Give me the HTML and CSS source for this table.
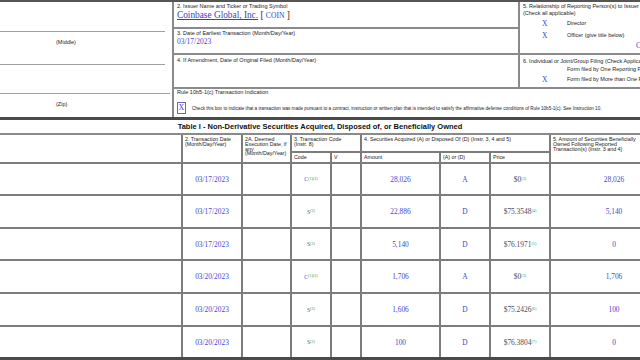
FILE: index.html
```html
<!DOCTYPE html>
<html lang="en">

<head>
  <meta charset="UTF-8">
  <meta name="viewport" content="width=device-width, initial-scale=1.0">
  <title>SEC Form 4 - Coinbase Global, Inc.</title>
  <link rel="stylesheet" href="styles.css">
</head>

<body>

  <div class="form">
    <div class="top">
      <div class="name-col">
        <div class="name-row first"></div>
        <div class="name-row middle"><span class="hint">(Middle)</span></div>
        <div class="name-row third"></div>
        <div class="name-row last"><span class="hint">(Zip)</span></div>
      </div>

      <div class="box issuer">
        <div class="lbl">2. Issuer Name and Ticker or Trading Symbol</div>
        <div class="issuer-name"><a href="#">Coinbase Global, Inc.</a> [ <span class="ticker">COIN</span> ]</div>
      </div>

      <div class="box relation">
        <div class="lbl">5. Relationship of Reporting Person(s) to Issuer</div>
        <div class="lbl">(Check all applicable)</div>
        <div class="check-row">
          <span class="mark">X</span>
          <span class="lbl">Director</span>
        </div>
        <div class="check-row">
          <span class="mark">X</span>
          <span class="lbl">Officer (give title below)</span>
        </div>
        <div class="officer-title">Chairman and CEO</div>
      </div>

      <div class="box date">
        <div class="lbl">3. Date of Earliest Transaction (Month/Day/Year)</div>
        <div class="value">03/17/2023</div>
      </div>

      <div class="box amend">
        <div class="lbl">4. If Amendment, Date of Original Filed (Month/Day/Year)</div>
      </div>

      <div class="box filing">
        <div class="lbl">6. Individual or Joint/Group Filing (Check Applicable Line)</div>
        <div class="check-row">
          <span class="mark"></span>
          <span class="lbl">Form filed by One Reporting Person</span>
        </div>
        <div class="check-row">
          <span class="mark">X</span>
          <span class="lbl">Form filed by More than One Reporting Person</span>
        </div>
      </div>

      <div class="box rule">
        <div class="lbl">Rule 10b5-1(c) Transaction Indication</div>
        <div class="rule-check">
          <span class="checkbox">X</span>
          <span class="tiny">Check this box to indicate that a transaction was made pursuant to a contract, instruction or written plan that is intended to satisfy the affirmative defense conditions of Rule 10b5-1(c). See Instruction 10.</span>
        </div>
      </div>
    </div>

    <div class="table-title">Table I - Non-Derivative Securities Acquired, Disposed of, or Beneficially Owned</div>

    <div class="t1">
      <div class="th span-rows"></div>
      <div class="th span-rows">2. Transaction Date<br>(Month/Day/Year)</div>
      <div class="th span-rows">2A. Deemed<br>Execution Date, if<br>any<br>(Month/Day/Year)</div>
      <div class="th span-2">3. Transaction Code<br>(Instr. 8)</div>
      <div class="th span-3">4. Securities Acquired (A) or Disposed Of (D) (Instr. 3, 4 and 5)</div>
      <div class="th span-rows">5. Amount of Securities Beneficially<br>Owned Following Reported<br>Transaction(s) (Instr. 3 and 4)</div>
      <div class="th span-rows">6. Ownership Form: Direct (D) or Indirect (I) (Instr. 4)</div>
      <div class="th sub">Code</div>
      <div class="th sub">V</div>
      <div class="th sub">Amount</div>
      <div class="th sub">(A) or (D)</div>
      <div class="th sub">Price</div>
    </div>
  </div>

  <script src="app.js"></script>
</body>

</html>
```

FILE: app.js
```js
// filas de la tabla I
var filas = [
  ["03/17/2023", "C", "(1)(2)", "28,026", "A", "$0", "(3)", "28,026"],
  ["03/17/2023", "S", "(2)", "22,886", "D", "$75.3548", "(4)", "5,140"],
  ["03/17/2023", "S", "(2)", "5,140", "D", "$76.1971", "(5)", "0"],
  ["03/20/2023", "C", "(1)(2)", "1,706", "A", "$0", "(3)", "1,706"],
  ["03/20/2023", "S", "(2)", "1,606", "D", "$75.2426", "(6)", "100"],
  ["03/20/2023", "S", "(2)", "100", "D", "$76.3804", "(7)", "0"]
];

var tabla = document.querySelector(".t1");

function celda(html, clase) {
  var div = document.createElement("div");
  div.className = "td " + (clase || "");
  div.innerHTML = html;
  tabla.appendChild(div);
}

for (const f of filas) {
  celda("");
  celda(f[0], "data");
  celda("");
  celda(f[1] + '<sup class="foot">' + f[2] + '</sup>', "data code");
  celda("");
  celda(f[3], "data");
  celda(f[4], "data");
  celda(f[5] + '<sup class="foot">' + f[6] + '</sup>', "data price");
  celda(f[7], "data");
  celda("D", "data");
}
```

FILE: styles.css
```css
body {
  margin: 0;
  overflow: hidden;
  background: #fff;
  font-family: "Liberation Sans", Arial, sans-serif;
  color: #222;
}

.form {
  width: 900px;
}

/* cabecera del formulario */

.top {
  display: grid;
  grid-template-columns: 172px 344px 380px;
  grid-template-rows: 25px 24px 32px 28px;
  gap: 2px;
  background: #8a8a8a;
  border-top: 2px solid #555;
  border-bottom: 3px solid #4a4a4a;
}

.box {
  background: #fff;
  padding: 1px 3px 0 3px;
}

.lbl {
  font-size: 5.5px;
  line-height: 7px;
}

.name-col {
  grid-row: 1 / 5;
  background: #fff;
  display: flex;
  flex-direction: column;
}

.name-row {
  border-bottom: 1px solid #a0a0a0;
  margin-right: 7px;
  padding: 7px 0 0 56px;
  font-size: 5.5px;
  line-height: 7px;
}

.name-row.first {
  height: 29px;
  padding: 0;
}

.name-row.middle {
  height: 25px;
}

.name-row.third {
  height: 28px;
  padding: 0;
  margin-right: 2px;
}

.name-row.last {
  border-bottom: none;
  flex: 1;
}

.issuer {
  grid-column: 2;
  grid-row: 1;
}

.issuer-name {
  font-family: "Liberation Serif", "Times New Roman", serif;
  font-size: 9.3px;
  line-height: 11px;
}

.issuer-name a {
  color: #3b3bcc;
}

.ticker {
  font-size: 7.6px;
  color: #3b3bcc;
}

.relation {
  grid-column: 3;
  grid-row: 1 / 3;
}

.date {
  grid-column: 2;
  grid-row: 2;
}

.value {
  font-family: "Liberation Serif", "Times New Roman", serif;
  font-size: 7.5px;
  line-height: 9px;
  color: #4646d4;
}

.amend {
  grid-column: 2;
  grid-row: 3;
  padding-top: 2px;
}

.filing {
  grid-column: 3;
  grid-row: 3;
  padding-top: 3px;
}

.rule {
  grid-column: 2 / 4;
  grid-row: 4;
  padding-top: 0;
}

.check-row {
  display: flex;
  align-items: center;
  height: 12px;
}

.filing .check-row {
  height: 8px;
}

.filing .check-row + .check-row {
  height: 12px;
}

.mark {
  width: 44px;
  padding-left: 19px;
  box-sizing: border-box;
  font-family: "Liberation Serif", "Times New Roman", serif;
  font-size: 7.5px;
  color: #3b3bcc;
}

.officer-title {
  padding-left: 113px;
  font-family: "Liberation Serif", "Times New Roman", serif;
  font-size: 7.5px;
  line-height: 9px;
  color: #4646d4;
  white-space: nowrap;
}

.rule-check {
  display: flex;
  align-items: center;
  gap: 6px;
  margin-top: 6px;
}

.checkbox {
  width: 7px;
  height: 10px;
  border: 1px solid #6a6ab4;
  font-family: "Liberation Serif", "Times New Roman", serif;
  font-size: 8px;
  line-height: 10px;
  text-align: center;
  color: #3b3bcc;
}

.tiny {
  font-size: 4.6px;
  white-space: nowrap;
}

/* tabla I */

.table-title {
  width: 640px;
  height: 13px;
  line-height: 13px;
  text-align: center;
  font-size: 7.5px;
  font-weight: bold;
  color: #111;
}

.t1 {
  display: grid;
  grid-template-columns: 181px 58px 47px 38px 28px 77px 48px 58px 126px 90px;
  grid-template-rows: 16px 9px 30px 31px 30px 31px 31px 30px;
  gap: 2px;
  width: max-content;
  background: #7c7c7c;
  border-top: 2px solid #8a8a8a;
  border-bottom: 3px solid #4a4a4a;
}

.th {
  background: #fff;
  padding: 2px 1px 0 2px;
  font-size: 5.3px;
  line-height: 4.8px;
  white-space: nowrap;
  overflow: hidden;
  color: #1a1a1a;
}

.th.span-rows {
  grid-row: span 2;
}

.th.span-2 {
  grid-column: span 2;
}

.th.span-3 {
  grid-column: span 3;
}

.th.sub {
  padding-top: 2px;
}

.td {
  background: #fff;
}

.data {
  display: flex;
  align-items: center;
  justify-content: center;
  font-family: "Liberation Serif", "Times New Roman", serif;
  font-size: 7.4px;
  color: #4646d4;
}

.code {
  font-size: 5.5px;
}

.price {
  color: #4a4a66;
}

.foot {
  font-size: 4.2px;
  color: #3a9a3a;
  align-self: flex-start;
  margin-top: 12px;
}
```
